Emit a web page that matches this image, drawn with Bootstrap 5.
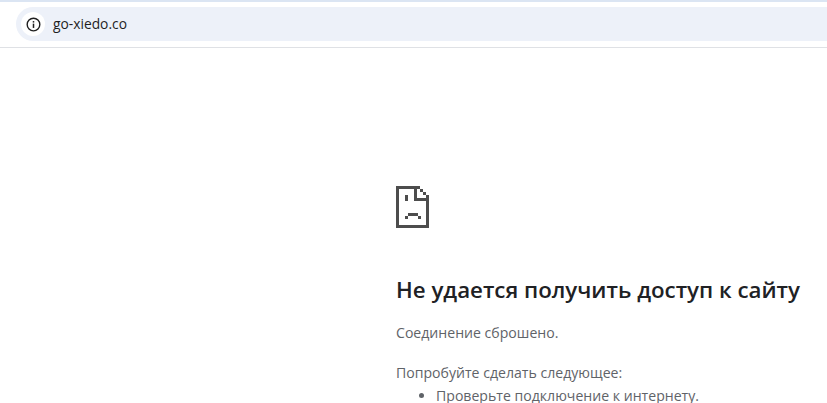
<!DOCTYPE html>
<html lang="ru"><head><meta charset="utf-8">
<link href="https://cdn.jsdelivr.net/npm/bootstrap@5.3.0/dist/css/bootstrap.min.css" rel="stylesheet">
<style>
html,body{height:403px;overflow:hidden;background:#fff}
body{font-family:"Open Sans","Noto Sans",sans-serif}
.topbar{height:48px;border-top:2px solid #dbe5f3;border-bottom:1px solid #dfe1e5;padding:5px 0 6px 16px}
.omni{height:34px;background:#edf1f9;border-radius:17px 0 0 17px;padding-left:5px;gap:8px}
.infochip{width:24px;height:24px;border-radius:50%;background:#fff;flex:none}
.urltext{font-size:13.8px;color:#1f1f1f}
.errwrap{padding:138px 0 0 396px;width:827px}
.sadicon{display:block;width:33px;height:42px}
.errhead{font-size:22.3px;font-weight:600;color:#202124;margin:46px 0 0;line-height:32px;white-space:nowrap}
.errtext{font-size:14.1px;color:#5f6368;line-height:20px;margin:0;white-space:nowrap}
.errgap1{margin-top:17px}
.errgap2{margin-top:20px}
.errlist{font-size:14.1px;color:#5f6368;line-height:16px;margin:5px 0 0;padding-left:40px;white-space:nowrap}
</style></head><body>
<div class="topbar"><div class="omni d-flex align-items-center">
<div class="infochip d-flex align-items-center justify-content-center">
<svg width="15" height="15" viewBox="0 0 14 14" fill="none"><circle cx="7" cy="7" r="5.9" stroke="#1f1f1f" stroke-width="1.3"/><rect x="6.3" y="6.2" width="1.4" height="4" fill="#1f1f1f"/><rect x="6.3" y="3.8" width="1.4" height="1.4" fill="#1f1f1f"/></svg>
</div><span class="urltext">go-xiedo.co</span></div></div>
<div class="errwrap">
<svg class="sadicon" viewBox="0 0 33 42" shape-rendering="crispEdges" fill="#4d4d4d"><path d="M0 0H24V3H3V39H30V15H33V42H0Z"/><path d="M18 0H21V12H33V15H18Z"/><path d="M24 3H27V6H24ZM27 6H30V9H27ZM30 9H33V12H30Z"/><rect x="9" y="9" width="3" height="6"/><rect x="9" y="30" width="3" height="3"/><rect x="12" y="27" width="10" height="3"/><rect x="22" y="30" width="3" height="3"/></svg>
<h1 class="errhead">Не удается получить доступ к сайту</h1>
<p class="errtext errgap1">Соединение сброшено.</p>
<p class="errtext errgap2">Попробуйте сделать следующее:</p>
<ul class="errlist"><li>Проверьте подключение к интернету.</li></ul>
</div>
<script src="https://cdn.jsdelivr.net/npm/bootstrap@5.3.0/dist/js/bootstrap.bundle.min.js"></script>
</body></html>
